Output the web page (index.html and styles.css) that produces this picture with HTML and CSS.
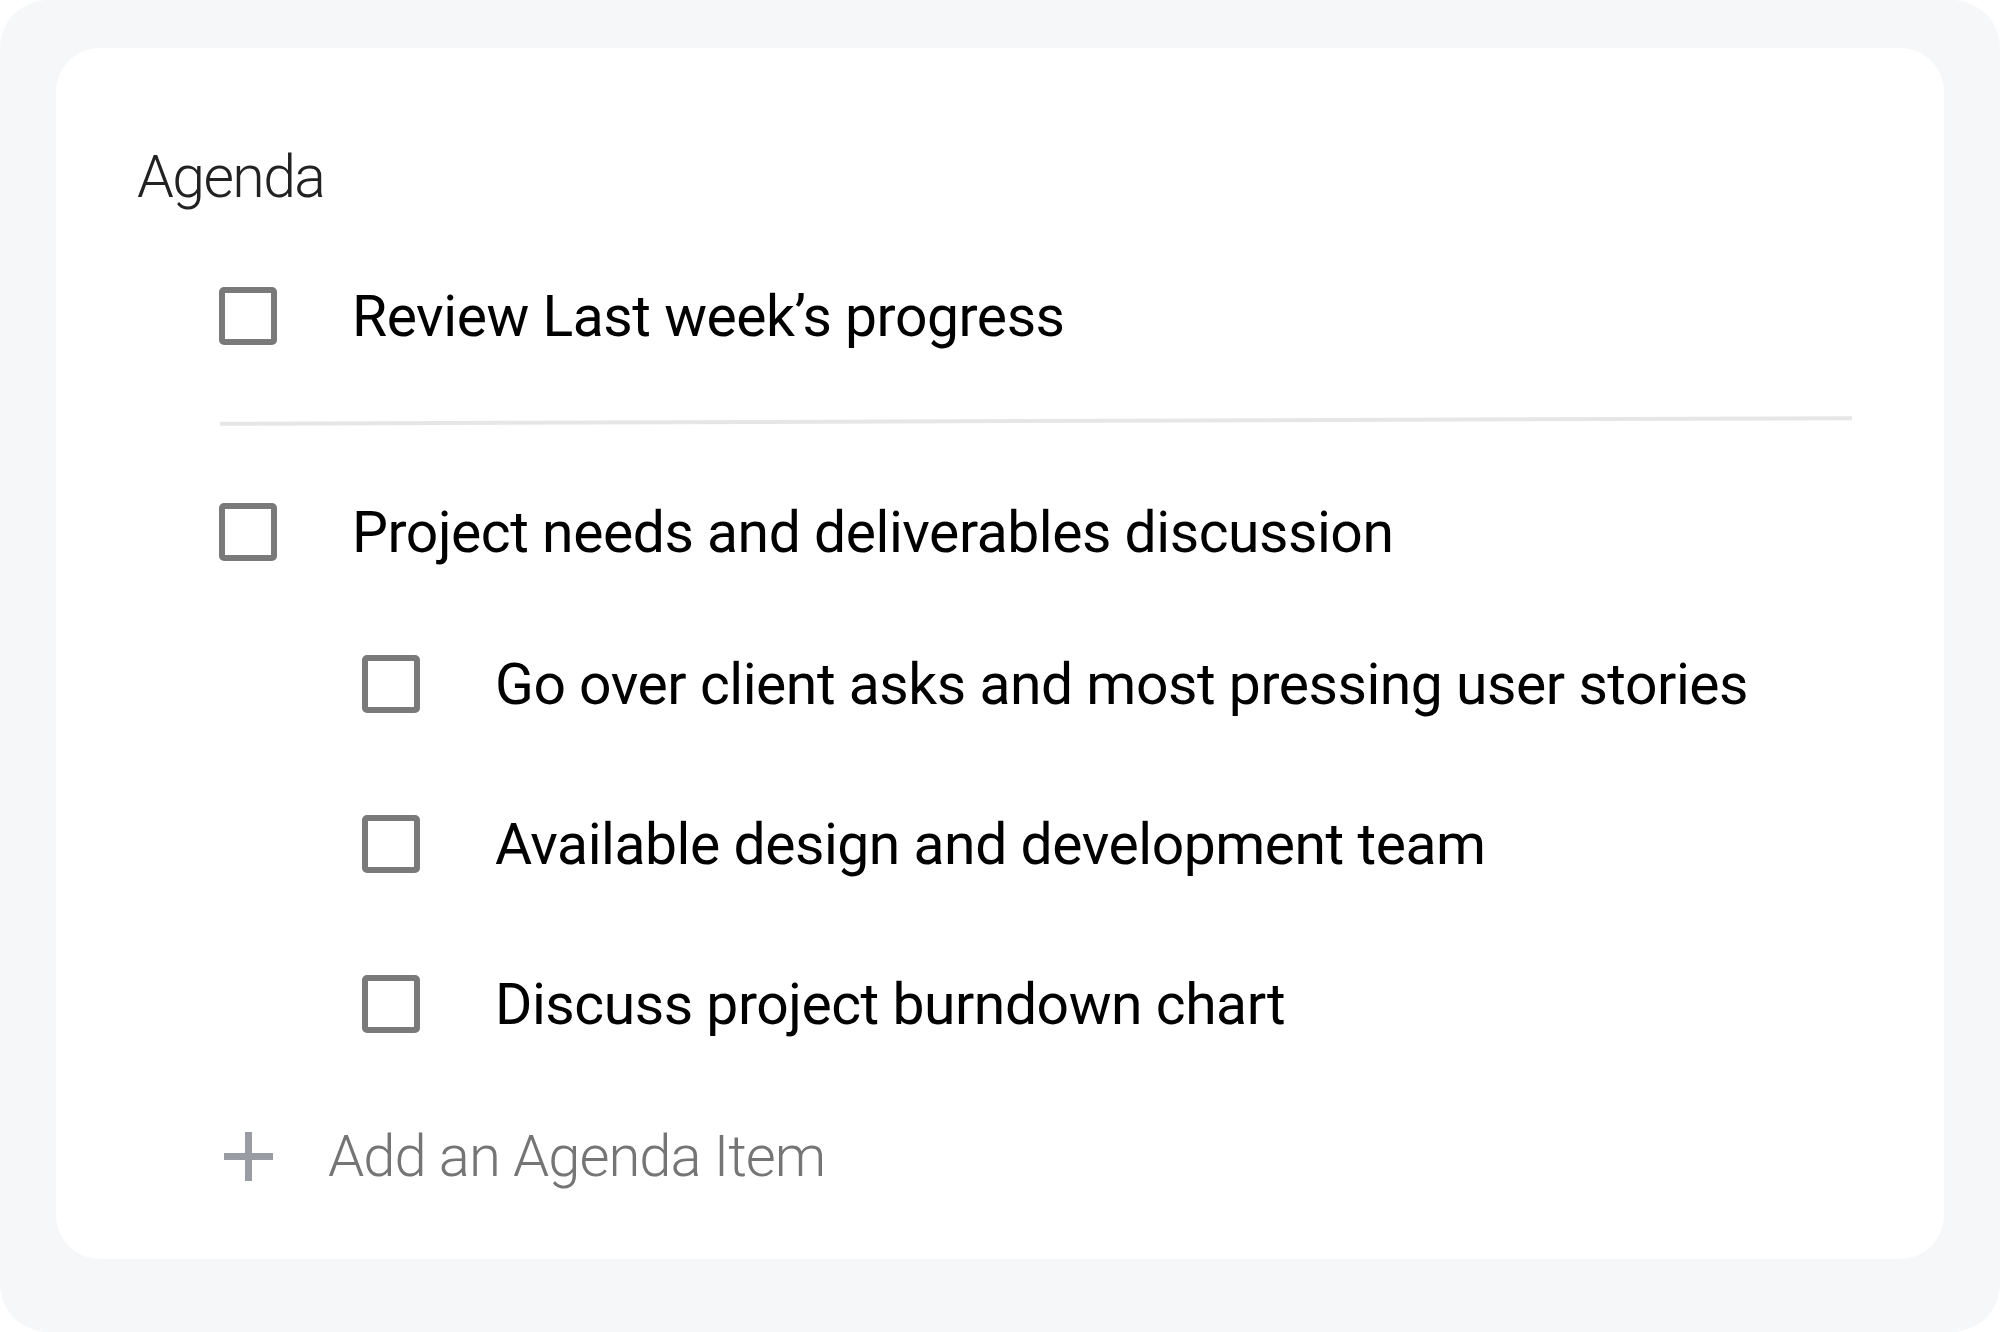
FILE: index.html
```html
<!DOCTYPE html>
<html lang="en">
<head>
  <meta charset="UTF-8" />
  <title>Agenda</title>
  <link rel="stylesheet" href="styles.css">
</head>
<body>
  <div class="frame">
    <div class="card">
      <h2 class="title">Agenda</h2>

      <div class="items">
        <!-- Top level items -->
        <div class="row">
          <span class="box"></span>
          <span class="text">Review Last week’s progress</span>
        </div>

        <div class="divider"></div>

        <div class="row">
          <span class="box"></span>
          <span class="text">Project needs and deliverables discussion</span>
        </div>

        <!-- Nested items -->
        <div class="sub">
          <div class="row">
            <span class="box"></span>
            <span class="text">Go over client asks and most pressing user stories</span>
          </div>
          <div class="row">
            <span class="box"></span>
            <span class="text">Available design and development team</span>
          </div>
          <div class="row">
            <span class="box"></span>
            <span class="text">Discuss project burndown chart</span>
          </div>
        </div>

        <div class="row add">
          <span class="plus">
            <svg width="49" height="49" viewBox="0 0 49 49">
              <rect x="21" y="0" width="7" height="49" fill="#9a9ca3"/>
              <rect x="0" y="21" width="49" height="7" fill="#9a9ca3"/>
            </svg>
          </span>
          <span class="add-text">Add an Agenda Item</span>
        </div>
      </div>
    </div>
  </div>
</body>
</html>
```

FILE: styles.css
```css
body {
  margin: 0;
  background: white;
  font-family: Roboto, "Liberation Sans", sans-serif;
}
.frame {
  box-sizing: border-box;
  height: 1332px;
  padding: 48px 56px;
  background: #f6f7f9;
  border-radius: 48px;
}
.card {
  background: white;
  border-radius: 44px;
  padding: 89px 0 43px 81px;
}
.title {
  margin: 0 0 39px;
  font-size: 59px;
  font-weight: 300;
  line-height: 80px;
  letter-spacing: -1.6px;
  color: #222;
}
.items {
  padding-left: 82px;
}
.row {
  display: flex;
  align-items: center;
  height: 120px;
}
.box {
  box-sizing: border-box;
  flex: none;
  width: 58px;
  height: 58px;
  border: 6px solid #7a7a7a;
  border-radius: 5px;
}
.text {
  margin-left: 75px;
  font-size: 57px;
  letter-spacing: -0.45px;
  color: #000;
  white-space: nowrap;
}
.divider {
  width: 1632px;
  height: 4px;
  margin: 43px 0 49px 1px;
  background: #e6e6e6;
  transform: rotate(-0.2deg);
}
.sub {
  display: flex;
  flex-direction: column;
  gap: 40px;
  margin-top: 32px;
  padding-left: 143px;
}
.add {
  margin-top: 32px;
}
.plus {
  display: flex;
  justify-content: center;
  width: 58px;
}
.add-text {
  margin-left: 51px;
  font-size: 58px;
  font-weight: 300;
  letter-spacing: -1px;
  color: #757575;
  white-space: nowrap;
}
```
